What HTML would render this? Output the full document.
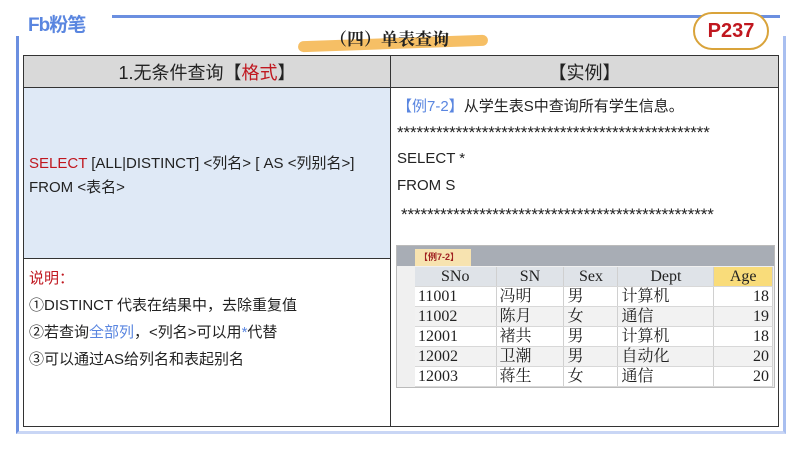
<!DOCTYPE html>
<html><head><meta charset="utf-8"><style>
body{margin:0;width:800px;height:450px;background:#fff;position:relative;overflow:hidden;font-family:"Liberation Sans","Noto Sans CJK SC",sans-serif;color:#222}
.a{position:absolute}
.frame{left:16px;top:36px;width:770px;height:398px;border-left:3px solid #6b8fe0;border-right:3px solid #a9bff0;border-bottom:3px solid #c9d6f5;box-sizing:border-box}
.topline{left:112px;top:15px;width:668px;height:3px;background:#6b8fe0}
table{position:absolute;left:23px;top:55px;width:756px;height:372px;border-collapse:collapse}
td{border:1.5px solid #333;vertical-align:top;padding:0}
.dt td{border:none;border-right:1px solid #d0d0d0;border-bottom:1px solid #d8d8d8;font-family:"Liberation Serif","Noto Serif CJK SC",serif;font-size:16px;padding:0 3px;height:19px;line-height:19px}
.st{font-size:17px;letter-spacing:-0.1px;line-height:17px}
</style></head><body>
<div class="a topline"></div>
<div class="a frame"></div>
<div class="a" style="left:28px;top:10px;font-size:19px;font-weight:bold;color:#5a86e0;letter-spacing:-1px">Fb粉笔</div>
<div class="a" style="left:298px;top:38px;width:190px;height:11px;background:#f5b44a;border-radius:6px;opacity:.85;transform:rotate(-2deg)"></div>
<div class="a" style="left:330px;top:25px;font-size:17px;font-family:'Noto Serif CJK SC',serif;font-weight:bold;color:#222">（四）单表查询</div>
<div class="a" style="left:693px;top:12px;width:76px;height:38px;border:2px solid #d9a33a;border-radius:20px;background:#fff;box-sizing:border-box;text-align:center;font-size:20px;font-weight:bold;color:#c0171f;line-height:34px">P237</div>
<table>
<tr style="height:32px;background:#d9d9d9"><td style="width:366px;text-align:center;vertical-align:middle;font-size:18px">1.无条件查询【<span style="color:#c0171f">格式</span>】</td><td style="text-align:center;vertical-align:middle;font-size:18px">【实例】</td></tr>
<tr style="height:171px"><td style="background:#dfe9f6;vertical-align:middle;font-size:15px;line-height:24px;padding:6px 0 0 5px"><span style="color:#c0171f">SELECT</span> [ALL|DISTINCT] &lt;列名&gt; [ AS &lt;列别名&gt;]<br>FROM &lt;表名&gt;</td>
<td rowspan="2" style="position:relative">
<div class="a" style="left:6px;top:7px;font-size:15px"><span style="color:#5a86e0">【例7-2】</span>从学生表S中查询所有学生信息。</div>
<div class="a st" style="left:6px;top:36px">************************************************</div>
<div class="a" style="left:6px;top:62px;font-size:15px">SELECT *</div>
<div class="a" style="left:6px;top:89px;font-size:15px">FROM S</div>
<div class="a st" style="left:10px;top:118px">************************************************</div>
<div class="a" style="left:5px;top:157px;width:377px;height:141px;background:#f0f0f0;border:1px solid #bbb">
<div style="height:20px;background:#a8adb5;position:relative"><div class="a" style="left:18px;top:3px;width:52px;height:17px;background:#f7e3b0;font-size:9px;font-weight:bold;line-height:17px;padding-left:4px;color:#a02020">【例7-2】</div></div>
<table style="position:absolute;left:18px;top:21px;width:358px;height:auto">
<tr class="dt" style="background:#dfe3e8"><td style="text-align:center">SNo</td><td style="text-align:center">SN</td><td style="text-align:center">Sex</td><td style="text-align:center">Dept</td><td style="text-align:center;background:#f9dc7a">Age</td></tr>
<tr class="dt" style="background:#fff"><td>11001</td><td>冯明</td><td>男</td><td>计算机</td><td style="text-align:right">18</td></tr>
<tr class="dt" style="background:#f2f2f2"><td>11002</td><td>陈月</td><td>女</td><td>通信</td><td style="text-align:right">19</td></tr>
<tr class="dt" style="background:#fff"><td>12001</td><td>褚共</td><td>男</td><td>计算机</td><td style="text-align:right">18</td></tr>
<tr class="dt" style="background:#f2f2f2"><td>12002</td><td>卫潮</td><td>男</td><td>自动化</td><td style="text-align:right">20</td></tr>
<tr class="dt" style="background:#fff"><td>12003</td><td>蒋生</td><td>女</td><td>通信</td><td style="text-align:right">20</td></tr>
</table></div>
</td></tr>
<tr><td style="padding:6px 0 0 5px;font-size:15px;line-height:27px"><span style="color:#c0171f">说明：</span><br>①DISTINCT 代表在结果中，去除重复值<br>②若查询<span style="color:#5a86e0">全部列</span>，&lt;列名&gt;可以用<span style="color:#5a86e0">*</span>代替<br>③可以通过AS给列名和表起别名</td></tr>
</table>
</body></html>
